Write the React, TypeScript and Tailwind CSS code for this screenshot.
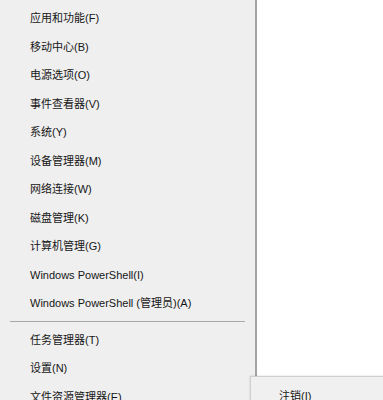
const items = [
  "应用和功能(F)",
  "移动中心(B)",
  "电源选项(O)",
  "事件查看器(V)",
  "系统(Y)",
  "设备管理器(M)",
  "网络连接(W)",
  "磁盘管理(K)",
  "计算机管理(G)",
  "Windows PowerShell(I)",
  "Windows PowerShell (管理员)(A)",
];

const lower = ["任务管理器(T)", "设置(N)", "文件资源管理器(E)"];

const font = {
  fontFamily: '"Liberation Sans", "Noto Sans CJK SC", sans-serif',
};

function Item({ label }: { label: string }) {
  return (
    <div className="flex h-[28.5px] shrink-0 items-center pl-[30px] text-[11px] text-[#161616]">
      {label}
    </div>
  );
}

export default function App() {
  return (
    <div className="relative flex h-[400px] w-[383px] overflow-hidden bg-white" style={font}>
      {/* Main context menu */}
      <div className="flex h-full w-[257px] shrink-0 flex-col border-r-[2px] border-[#a3a3a3] bg-[#efefef] pt-[4px]">
        {items.map((label) => (
          <Item key={label} label={label} />
        ))}
        <div className="mx-[10px] my-[3.5px] h-px shrink-0 bg-[#a8a8a8]" />
        {lower.map((label) => (
          <Item key={label} label={label} />
        ))}
      </div>

      {/* Submenu */}
      <div className="absolute left-[250px] top-[376px] h-[60px] w-[150px] border border-[#cfcfcf] bg-[#f0f0f0] shadow-[0_0_2px_rgba(0,0,0,0.15)]">
        <div className="flex h-[38px] items-center pl-[28px] text-[11px] text-[#161616]">
          注销(I)
        </div>
      </div>
    </div>
  );
}
